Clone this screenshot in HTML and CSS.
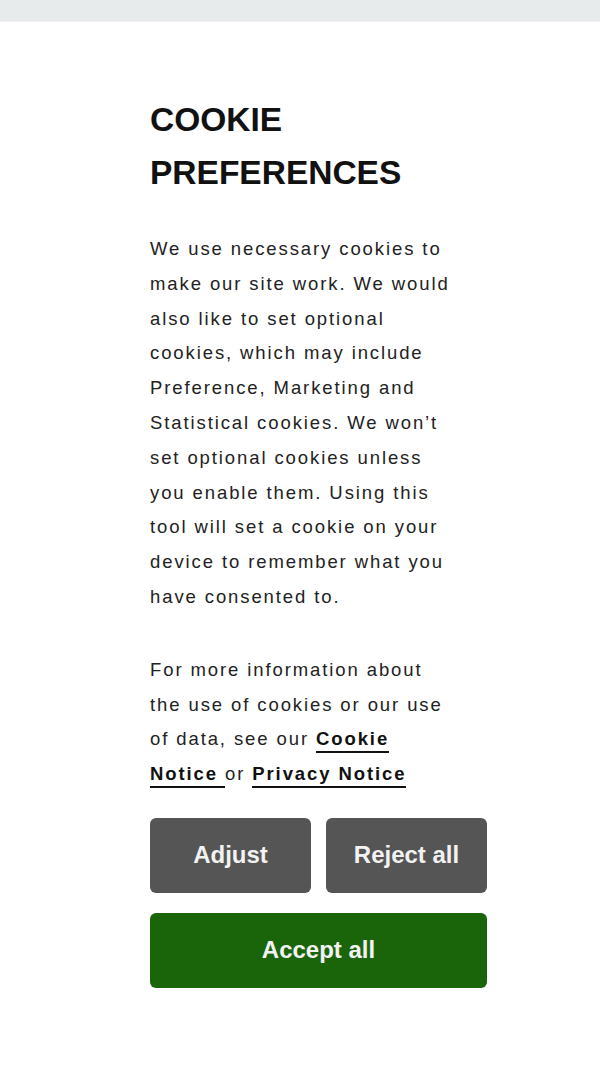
FILE: index.html
```html
<!DOCTYPE html>
<html lang="en">
<head>
    <meta charset="UTF-8">
    <meta name="viewport" content="width=device-width, initial-scale=1.0">
    <title>Cookie Preferences</title>
    <link rel="stylesheet" href="styles.css">
</head>
<body>
    <div class="topbar"></div>

    <div class="cookie-panel">
        <h1 class="cookie-title">COOKIE PREFERENCES</h1>

        <p class="cookie-text">We use necessary cookies to make our site work. We would also like to set optional cookies, which may include Preference, Marketing and Statistical cookies. We won’t set optional cookies unless you enable them. Using this tool will set a cookie on your device to remember what you have consented to.</p>

        <p class="cookie-text">For more information about the use of cookies or our use of data, see our <a href="#" class="cookie-link">Cookie Notice </a> or <a href="#" class="cookie-link">Privacy Notice</a></p>

        <div class="cookie-actions">
            <button class="btn btn-grey">Adjust</button>
            <button class="btn btn-grey">Reject all</button>
            <button class="btn btn-green btn-wide">Accept all</button>
        </div>
    </div>
</body>
</html>
```

FILE: styles.css
```css
* {
    margin: 0;
    padding: 0;
    box-sizing: border-box;
}

body {
    font-family: 'Liberation Sans', Arial, sans-serif;
    background: white;
    color: #222;
    min-height: 100vh;
}

.topbar {
    height: 22px;
    background: #e7ebeb;
    border-bottom: 1px solid #eef1f0;
}

.cookie-panel {
    width: 337px;
    margin-left: 150px;
    padding-top: 71px;
}

.cookie-title {
    font-size: 33.5px;
    font-weight: 700;
    line-height: 53px;
    color: #111;
    width: 300px;
    margin-bottom: 33px;
}

.cookie-text {
    font-size: 18.5px;
    letter-spacing: 1.9px;
    line-height: 34.8px;
    width: 304px;
    margin-bottom: 38px;
}

.cookie-text:last-of-type {
    margin-bottom: 26px;
}

.cookie-link {
    color: #111;
    font-weight: 700;
    text-decoration: none;
    border-bottom: 2px solid #111;
    padding-bottom: 2px;
}

.cookie-actions {
    display: grid;
    grid-template-columns: 1fr 1fr;
    gap: 20px 15px;
}

.btn {
    font-family: inherit;
    height: 75px;
    border: none;
    border-radius: 6px;
    color: #f2f2f2;
    font-size: 24px;
    font-weight: 700;
    cursor: pointer;
}

.btn-grey {
    background: #555555;
}

.btn-green {
    background: #1a650a;
}

.btn-wide {
    grid-column: 1 / 3;
}
```
